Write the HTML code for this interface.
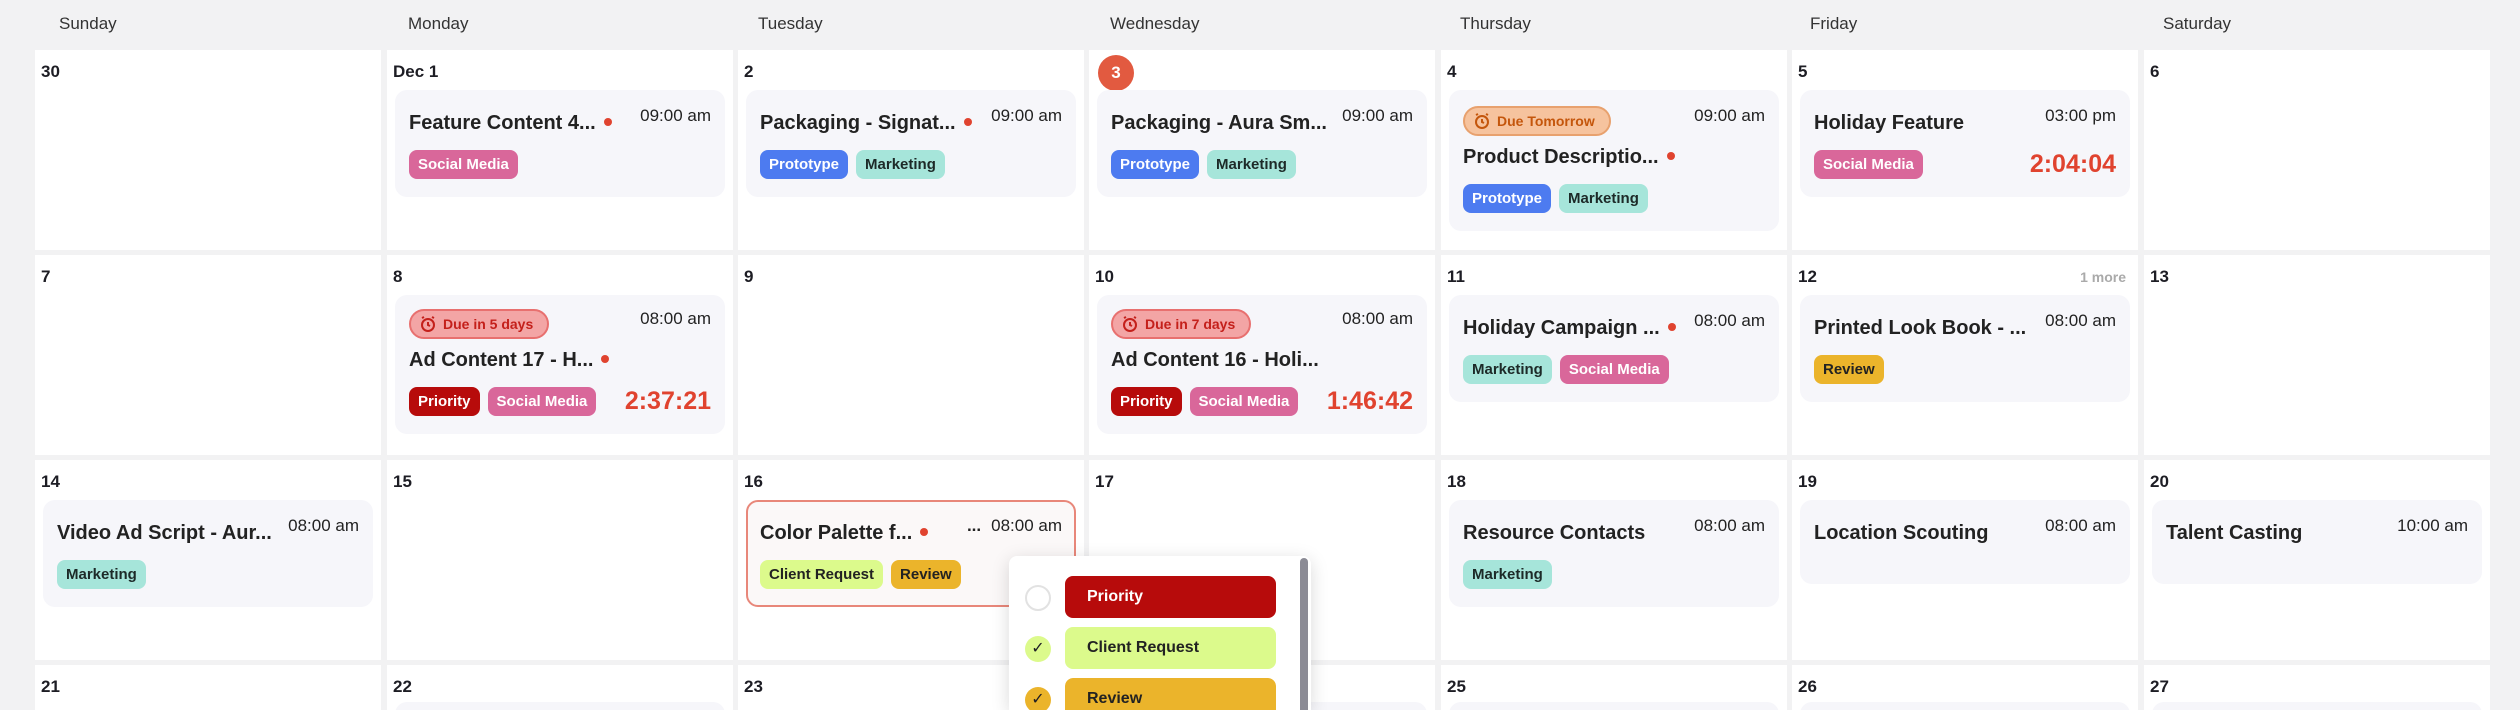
<!DOCTYPE html>
<html style="width:2520px;height:710px;overflow:hidden"><head><meta charset="utf-8"><style>
*{box-sizing:border-box;margin:0;padding:0}
html,body{width:2520px;height:710px;overflow:hidden}
body{background:#f2f2f3;font-family:"Liberation Sans",sans-serif;color:#1d1d24;position:relative}
#wrap{position:absolute;left:0;top:0;width:2520px;height:710px;overflow:hidden}
.hd{position:absolute;top:14px;font-size:17px;color:#333}
.cell{position:absolute;background:#fff;width:346px;height:200px}
.dn{position:absolute;left:6px;top:12px;font-size:17px;font-weight:bold}
.card{position:absolute;left:8px;width:330px;top:40px;background:#f6f6fa;border-radius:12px;padding:16px 14px 18px}
.row{display:flex;justify-content:space-between;align-items:flex-start;height:30px}
.tt{font-size:20px;font-weight:bold;color:#222;margin-top:6px;white-space:nowrap}
.tm{font-size:17px;color:#222;white-space:nowrap}
.dot{display:inline-block;width:8px;height:8px;border-radius:50%;background:#e0432f;margin-left:8px;vertical-align:3px}
.tags{display:flex;gap:8px;margin-top:14px;align-items:center}
.tg{height:29px;line-height:29px;padding:0 9px;border-radius:8px;font-size:15px;font-weight:bold}
.sm{background:#d9679a;color:#fff}.pr{background:#4d7bf0;color:#fff}.mk{background:#a6e5da;color:#1d2a28}
.pri{background:#b70b0b;color:#fff}.cr{background:#dcfa8c;color:#222}.rv{background:#ebb42b;color:#222}
.timer{margin-left:auto;color:#e0432f;font-size:25px;font-weight:bold}
.due{display:inline-flex;align-items:center;height:30px;padding:0 14px 0 8px;border-radius:15px;font-size:14px;font-weight:bold;border:2px solid}
.dr{background:#f3a5a5;border-color:#e8706f;color:#c4201b}
.do{background:#f6c39e;border-color:#e8a16e;color:#c4560c}
.due svg{margin-right:6px}
</style></head><body><div id="wrap">
<div class="hd" style="left:59px">Sunday</div>
<div class="hd" style="left:408px">Monday</div>
<div class="hd" style="left:758px">Tuesday</div>
<div class="hd" style="left:1110px">Wednesday</div>
<div class="hd" style="left:1460px">Thursday</div>
<div class="hd" style="left:1810px">Friday</div>
<div class="hd" style="left:2163px">Saturday</div>

<div class="cell" style="left:35px;top:50px"><div class="dn">30</div></div>
<div class="cell" style="left:387px;top:50px"><div class="dn">Dec 1</div>
<div class="card"><div class="row"><div class="tt">Feature Content 4...<span class="dot"></span></div><div class="tm">09:00 am</div></div><div class="tags"><span class="tg sm">Social Media</span></div></div></div>
<div class="cell" style="left:738px;top:50px"><div class="dn">2</div>
<div class="card"><div class="row"><div class="tt">Packaging - Signat...<span class="dot"></span></div><div class="tm">09:00 am</div></div><div class="tags"><span class="tg pr">Prototype</span><span class="tg mk">Marketing</span></div></div></div>
<div class="cell" style="left:1089px;top:50px"><div class="dn" style="top:5px;left:9px;width:36px;height:36px;border-radius:50%;background:#e25a40;color:#fff;text-align:center;line-height:36px">3</div>
<div class="card"><div class="row"><div class="tt">Packaging - Aura Sm...</div><div class="tm">09:00 am</div></div><div class="tags"><span class="tg pr">Prototype</span><span class="tg mk">Marketing</span></div></div></div>
<div class="cell" style="left:1441px;top:50px"><div class="dn">4</div>
<div class="card"><div class="row"><span class="due do"><svg width="18" height="18" viewBox="0 0 18 18" fill="none" stroke="#c4560c" stroke-width="2"><circle cx="9" cy="10" r="6"/><path d="M9 7v3l2 1M3 3l2-1M15 3l-2-1"/></svg>Due Tomorrow</span><div class="tm">09:00 am</div></div><div class="row" style="margin-top:4px"><div class="tt">Product Descriptio...<span class="dot"></span></div></div><div class="tags"><span class="tg pr">Prototype</span><span class="tg mk">Marketing</span></div></div></div>
<div class="cell" style="left:1792px;top:50px"><div class="dn">5</div>
<div class="card"><div class="row"><div class="tt">Holiday Feature</div><div class="tm">03:00 pm</div></div><div class="tags"><span class="tg sm">Social Media</span><span class="timer">2:04:04</span></div></div></div>
<div class="cell" style="left:2144px;top:50px"><div class="dn">6</div></div>

<div class="cell" style="left:35px;top:255px"><div class="dn">7</div></div>
<div class="cell" style="left:387px;top:255px"><div class="dn">8</div>
<div class="card" style="padding-top:14px"><div class="row"><span class="due dr"><svg width="18" height="18" viewBox="0 0 18 18" fill="none" stroke="#c4201b" stroke-width="2"><circle cx="9" cy="10" r="6"/><path d="M9 7v3l2 1M3 3l2-1M15 3l-2-1"/></svg>Due in 5 days</span><div class="tm">08:00 am</div></div><div class="row" style="margin-top:4px"><div class="tt">Ad Content 17 - H...<span class="dot"></span></div></div><div class="tags"><span class="tg pri">Priority</span><span class="tg sm">Social Media</span><span class="timer">2:37:21</span></div></div></div>
<div class="cell" style="left:738px;top:255px"><div class="dn">9</div></div>
<div class="cell" style="left:1089px;top:255px"><div class="dn">10</div>
<div class="card" style="padding-top:14px"><div class="row"><span class="due dr"><svg width="18" height="18" viewBox="0 0 18 18" fill="none" stroke="#c4201b" stroke-width="2"><circle cx="9" cy="10" r="6"/><path d="M9 7v3l2 1M3 3l2-1M15 3l-2-1"/></svg>Due in 7 days</span><div class="tm">08:00 am</div></div><div class="row" style="margin-top:4px"><div class="tt">Ad Content 16 - Holi...</div></div><div class="tags"><span class="tg pri">Priority</span><span class="tg sm">Social Media</span><span class="timer">1:46:42</span></div></div></div>
<div class="cell" style="left:1441px;top:255px"><div class="dn">11</div>
<div class="card"><div class="row"><div class="tt">Holiday Campaign ...<span class="dot"></span></div><div class="tm">08:00 am</div></div><div class="tags"><span class="tg mk">Marketing</span><span class="tg sm">Social Media</span></div></div></div>
<div class="cell" style="left:1792px;top:255px"><div class="dn">12</div><div style="position:absolute;right:12px;top:14px;font-size:14px;font-weight:bold;color:#aaa">1 more</div>
<div class="card"><div class="row"><div class="tt">Printed Look Book - ...</div><div class="tm">08:00 am</div></div><div class="tags"><span class="tg rv">Review</span></div></div></div>
<div class="cell" style="left:2144px;top:255px"><div class="dn">13</div></div>

<div class="cell" style="left:35px;top:460px"><div class="dn">14</div>
<div class="card"><div class="row"><div class="tt">Video Ad Script - Aur...</div><div class="tm">08:00 am</div></div><div class="tags"><span class="tg mk">Marketing</span></div></div></div>
<div class="cell" style="left:387px;top:460px"><div class="dn">15</div></div>
<div class="cell" style="left:738px;top:460px"><div class="dn">16</div>
<div class="card" style="background:#fbf8f8;border:2px solid #e8877a;padding:14px 12px 16px"><div class="row"><div class="tt">Color Palette f...<span class="dot"></span></div><div class="tm"><b style="margin-right:10px">...</b>08:00 am</div></div><div class="tags"><span class="tg cr">Client Request</span><span class="tg rv">Review</span></div></div></div>
<div class="cell" style="left:1089px;top:460px"><div class="dn">17</div></div>
<div class="cell" style="left:1441px;top:460px"><div class="dn">18</div>
<div class="card"><div class="row"><div class="tt">Resource Contacts</div><div class="tm">08:00 am</div></div><div class="tags"><span class="tg mk">Marketing</span></div></div></div>
<div class="cell" style="left:1792px;top:460px"><div class="dn">19</div>
<div class="card" style="height:84px"><div class="row"><div class="tt">Location Scouting</div><div class="tm">08:00 am</div></div></div></div>
<div class="cell" style="left:2144px;top:460px"><div class="dn">20</div>
<div class="card" style="height:84px"><div class="row"><div class="tt">Talent Casting</div><div class="tm">10:00 am</div></div></div></div>

<div class="cell" style="left:35px;top:665px;height:45px"><div class="dn">21</div></div>
<div class="cell" style="left:387px;top:665px;height:45px;overflow:hidden"><div class="dn">22</div><div class="card" style="top:37px;height:8px;border-radius:12px 12px 0 0"></div></div>
<div class="cell" style="left:738px;top:665px;height:45px"><div class="dn">23</div></div>
<div class="cell" style="left:1089px;top:665px;height:45px;overflow:hidden"><div class="dn">24</div><div class="card" style="top:37px;height:8px;border-radius:12px 12px 0 0"></div></div>
<div class="cell" style="left:1441px;top:665px;height:45px;overflow:hidden"><div class="dn">25</div><div class="card" style="top:37px;height:8px;border-radius:12px 12px 0 0"></div></div>
<div class="cell" style="left:1792px;top:665px;height:45px;overflow:hidden"><div class="dn">26</div><div class="card" style="top:37px;height:8px;border-radius:12px 12px 0 0"></div></div>
<div class="cell" style="left:2144px;top:665px;height:45px;overflow:hidden"><div class="dn">27</div><div class="card" style="top:37px;height:8px;border-radius:12px 12px 0 0"></div></div>

<div style="position:absolute;left:1009px;top:556px;width:302px;height:154px;background:#fff;border-radius:8px 8px 0 0;box-shadow:0 4px 18px rgba(0,0,0,.15);overflow:hidden">
<div style="position:absolute;right:3px;top:2px;width:8px;height:152px;border-radius:4px 4px 0 0;background:#8b8b95"></div>
<div style="position:absolute;left:16px;top:29px;width:26px;height:26px;border-radius:50%;border:2px solid #e2e2e2"></div>
<div class="tg pri" style="position:absolute;left:56px;top:20px;width:211px;height:42px;line-height:42px;padding-left:22px;font-size:16px">Priority</div>
<div style="position:absolute;left:16px;top:80px;width:26px;height:26px;border-radius:50%;background:#dcfa8c;text-align:center;line-height:26px;font-size:16px">✓</div>
<div class="tg cr" style="position:absolute;left:56px;top:71px;width:211px;height:42px;line-height:42px;padding-left:22px;font-size:16px">Client Request</div>
<div style="position:absolute;left:16px;top:131px;width:26px;height:23px;overflow:hidden"><div style="width:26px;height:26px;border-radius:50%;background:#ebb42b;text-align:center;line-height:26px;font-size:16px">✓</div></div>
<div style="position:absolute;left:56px;top:122px;width:211px;height:32px;overflow:hidden;border-radius:8px 8px 0 0"><div class="tg rv" style="height:42px;line-height:42px;padding-left:22px;font-size:16px">Review</div></div>
</div>
</div></body></html>
